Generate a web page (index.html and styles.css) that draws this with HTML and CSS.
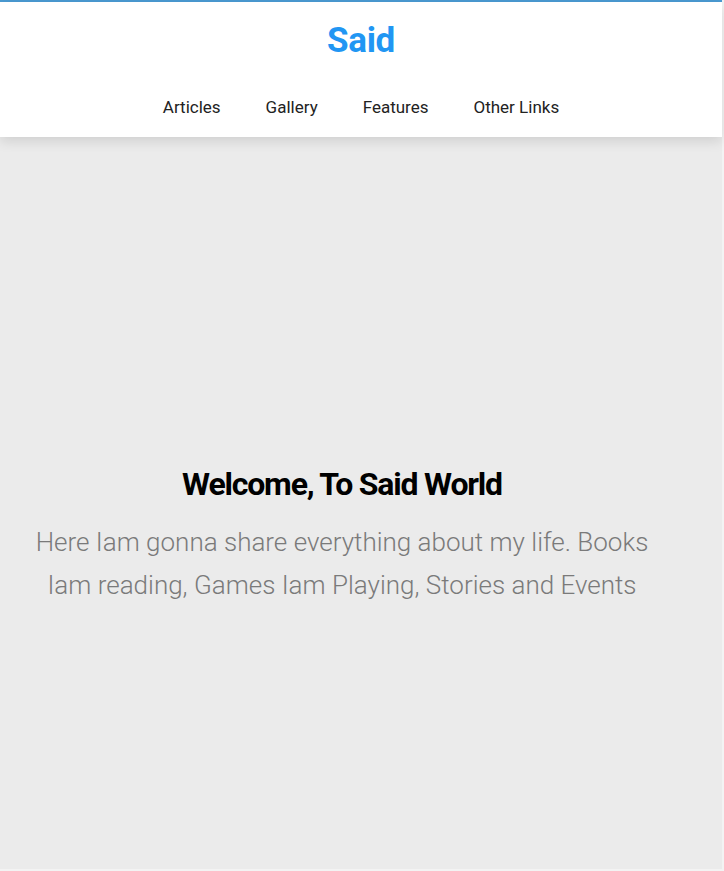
FILE: index.html
```html
<!DOCTYPE html>
<html lang="en">
<head>
<meta charset="utf-8">
<title>Said</title>
<link rel="stylesheet" href="styles.css">
</head>
<body>
<div class="page">
  <header class="header">
    <a class="logo" href="#">Said</a>
    <nav class="nav">
      <a href="#">Articles</a>
      <a href="#">Gallery</a>
      <a href="#">Features</a>
      <a href="#">Other Links</a>
    </nav>
  </header>
  <section class="hero">
    <h1 class="hero-title">Welcome, To Said World</h1>
    <p class="hero-text">Here Iam gonna share everything about my life. Books Iam reading, Games Iam Playing, Stories and Events</p>
  </section>
</div>
</body>
</html>
```
FILE: styles.css
```css
* { box-sizing: border-box; }
html, body { margin: 0; padding: 0; }
body {
  background: #f3f3f3;
  font-family: Roboto, "Open Sans", sans-serif;
}
.page {
  width: calc(100% - 2px);
  border-top: 2px solid #4a9bd3;
  background: #ebebeb;
  min-height: 869px;
  display: flex;
  flex-direction: column;
}
.header {
  background: #fff;
  box-shadow: 0 4px 12px rgba(0,0,0,0.12);
  display: flex;
  flex-direction: column;
  align-items: center;
  height: 135px;
  position: relative;
  z-index: 1;
}
.logo {
  margin-top: 18px;
  font-size: 35px;
  font-weight: 700;
  color: #2196f3;
  text-decoration: none;
  letter-spacing: -0.3px;
  line-height: 42px;
}
.nav {
  margin-top: 33px;
  display: flex;
  gap: 45px;
}
.nav a {
  color: #222;
  text-decoration: none;
  font-size: 17px;
  line-height: 24px;
  font-weight: 400;
}
.hero {
  flex: 1;
  display: flex;
  flex-direction: column;
  align-items: center;
  justify-content: center;
  text-align: center;
  padding: 0 38px 0 0;
}
.hero-title {
  margin: 65px 0 0;
  font-size: 32px;
  font-weight: 700;
  letter-spacing: -1.2px;
  color: #000;
  line-height: 40px;
}
.hero-text {
  margin: 17px 0 0;
  font-size: 26px;
  line-height: 43px;
  color: #7a7a7a;
  font-weight: 300;
  max-width: 640px;
}
```
